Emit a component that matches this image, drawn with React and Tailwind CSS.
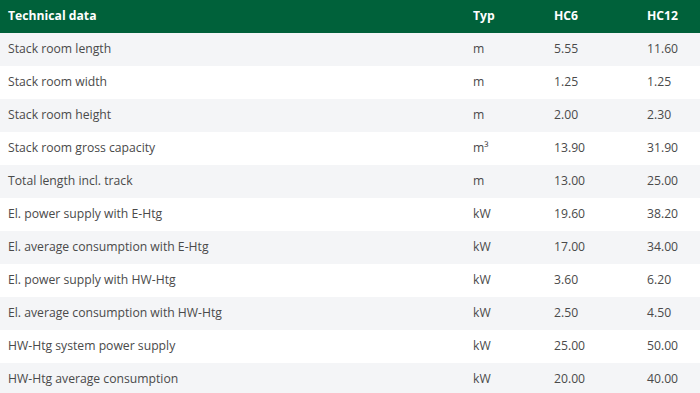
const rows = [
  ["Stack room length", "m", "5.55", "11.60"],
  ["Stack room width", "m", "1.25", "1.25"],
  ["Stack room height", "m", "2.00", "2.30"],
  ["Stack room gross capacity", "m³", "13.90", "31.90"],
  ["Total length incl. track", "m", "13.00", "25.00"],
  ["El. power supply with E-Htg", "kW", "19.60", "38.20"],
  ["El. average consumption with E-Htg", "kW", "17.00", "34.00"],
  ["El. power supply with HW-Htg", "kW", "3.60", "6.20"],
  ["El. average consumption with HW-Htg", "kW", "2.50", "4.50"],
  ["HW-Htg system power supply", "kW", "25.00", "50.00"],
  ["HW-Htg average consumption", "kW", "20.00", "40.00"],
];

export default function App() {
  return (
    <div
      className="w-[700px] h-[393px] overflow-hidden bg-white text-[12.2px] text-[#4a4a4a]"
      style={{ fontFamily: '"Open Sans", sans-serif' }}
    >
      <table className="w-full border-collapse table-fixed">
        <colgroup>
          <col className="w-[465px]" />
          <col className="w-[81px]" />
          <col className="w-[93px]" />
          <col />
        </colgroup>
        <thead>
          <tr className="bg-[#00613a] text-white h-[33px]">
            <th className="text-left pl-2 font-bold">Technical data</th>
            <th className="text-left pl-2 font-bold">Typ</th>
            <th className="text-left pl-2 font-bold">HC6</th>
            <th className="text-left pl-2 font-bold">HC12</th>
          </tr>
        </thead>
        <tbody>
          {rows.map((r, i) => (
            <tr
              key={i}
              className={`h-[33px] ${i % 2 === 0 ? "bg-[#f4f5f7]" : "bg-white"}`}
            >
              {r.map((c, j) => (
                <td key={j} className="pl-2 py-0">
                  {c}
                </td>
              ))}
            </tr>
          ))}
        </tbody>
      </table>
    </div>
  );
}
